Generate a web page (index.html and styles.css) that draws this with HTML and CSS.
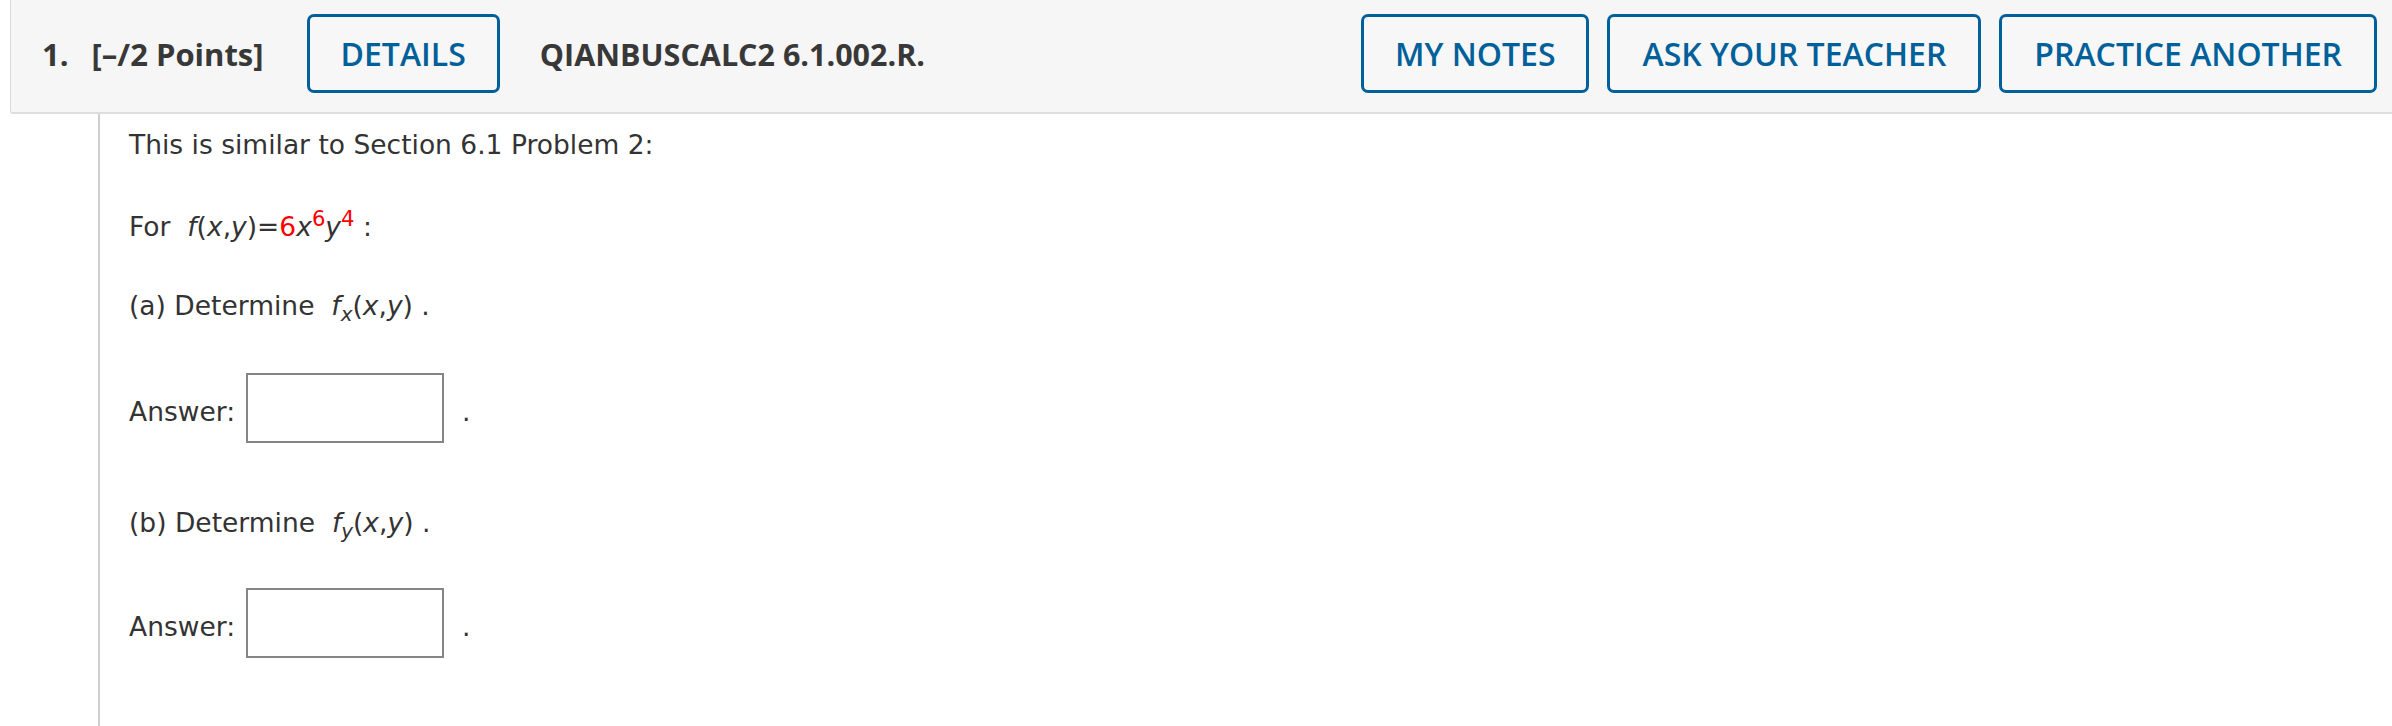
FILE: index.html
```html
<!DOCTYPE html>
<html>
<head>
<meta charset="utf-8">
<link rel="stylesheet" href="styles.css">
</head>
<body>
<div class="page">
  <div class="qhead">
    <div class="qnum">1.</div>
    <div class="qpts">[–/2 Points]</div>
    <button class="qbtn">DETAILS</button>
    <div class="qcode">QIANBUSCALC2 6.1.002.R.</div>
    <div class="spacer"></div>
    <div class="qactions">
      <button class="qbtn">MY NOTES</button>
      <button class="qbtn">ASK YOUR TEACHER</button>
      <button class="qbtn">PRACTICE ANOTHER</button>
    </div>
  </div>
  <div class="qbody">
    <div class="line l-intro">This is similar to Section 6.1 Problem 2:</div>
    <div class="line l-for">For&nbsp; <span class="m"><i>f</i>(<i>x</i>,<i>y</i>)=<span class="red">6</span><i>x</i><sup class="red">6</sup><i>y</i><sup class="red">4</sup></span> :</div>
    <div class="line l-part">(a) Determine&nbsp; <span class="m"><i>f</i><sub><i>x</i></sub>(<i>x</i>,<i>y</i>)</span> .</div>
    <div class="answer">
      <span class="alabel">Answer:</span>
      <input class="abox" type="text">
      <span class="adot">.</span>
    </div>
    <div class="line l-partb">(b) Determine&nbsp; <span class="m"><i>f</i><sub><i>y</i></sub>(<i>x</i>,<i>y</i>)</span> .</div>
    <div class="answer answer-b">
      <span class="alabel">Answer:</span>
      <input class="abox" type="text">
      <span class="adot">.</span>
    </div>
  </div>
</div>
</body>
</html>
```

FILE: styles.css
```css
html, body {
  margin: 0;
  padding: 0;
  background: #fff;
}
.page {
  padding-left: 10px;
  height: 726px;
  overflow: hidden;
}
.qhead {
  display: flex;
  align-items: center;
  box-sizing: border-box;
  height: 114px;
  background: #f6f6f6;
  border-left: 1px solid #dadada;
  border-bottom: 2px solid #dedede;
  border-bottom-left-radius: 3px;
  padding: 0 15px 5px 31px;
  font-family: "Open Sans", "Liberation Sans", sans-serif;
  color: #383838;
}
.qnum {
  font-size: 31px;
  font-weight: 700;
  margin-right: 23px;
}
.qpts {
  font-size: 31px;
  font-weight: 700;
  margin-right: 43px;
}
.qcode {
  font-size: 30.5px;
  font-weight: 700;
  margin-left: 40px;
}
.spacer {
  flex: 1;
}
.qactions {
  display: flex;
  gap: 18px;
}
.qbtn {
  font-family: "Open Sans", "Liberation Sans", sans-serif;
  font-size: 32px;
  font-weight: 600;
  color: #00609a;
  background: #f7f7f7;
  border: 3px solid #00609a;
  border-radius: 7px;
  height: 79px;
  padding: 0 32px;
  margin: 0;
  line-height: 1;
}
.qbtn:first-of-type {
  padding: 0 31px;
}
.qbody {
  margin-left: 88px;
  border-left: 2px solid #cfcfcf;
  padding-left: 29px;
  padding-top: 15px;
  height: 700px;
  font-family: "DejaVu Sans", Verdana, sans-serif;
  font-size: 26.5px;
  color: #333;
}
.line {
  line-height: 32px;
  white-space: nowrap;
}
.l-for {
  margin-top: 50px;
}
.l-part {
  margin-top: 47px;
}
.l-partb {
  margin-top: 64px;
}
.m i {
  font-style: italic;
}
.red {
  color: #f00;
}
sup {
  font-size: 80%;
  vertical-align: super;
  line-height: 0;
}
sub {
  font-size: 75%;
  vertical-align: sub;
  line-height: 0;
}
.answer {
  display: flex;
  align-items: center;
  margin-top: 51px;
}
.answer-b {
  margin-top: 49px;
}
.alabel {
  line-height: 32px;
  padding-top: 8px;
}
.abox {
  width: 198px;
  height: 70px;
  box-sizing: border-box;
  border: 2px solid #858585;
  background: #fff;
  margin: 0 0 0 11px;
  padding: 0;
}
.adot {
  line-height: 32px;
  padding-top: 8px;
  margin-left: 18px;
}
```
